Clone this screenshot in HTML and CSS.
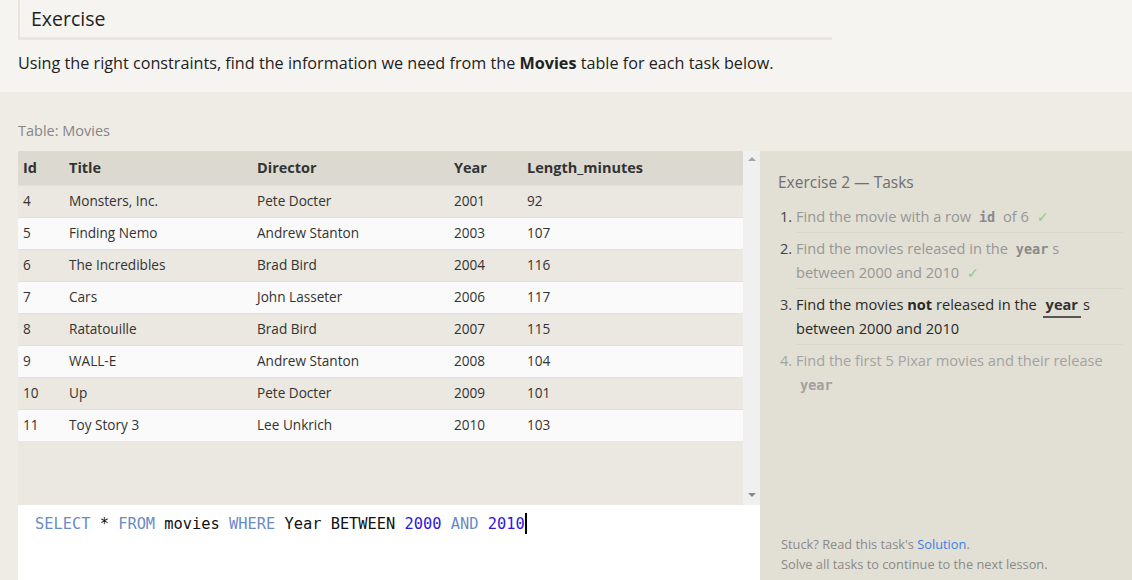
FILE: index.html
```html
<!DOCTYPE html>
<html>
<head>
<meta charset="utf-8">
<link rel="stylesheet" href="styles.css">
</head>
<body>
<section class="intro">
  <div class="heading"><h1>Exercise</h1></div>
  <p class="lead">Using the right constraints, find the information we need from the <strong>Movies</strong> table for each task below.</p>
</section>
<section class="exercise">
  <div class="caption">Table: Movies</div>
  <div class="workspace">
    <div class="left">
      <div class="results">
        <div class="table-scroll">
          <table class="movies">
            <thead>
              <tr><th class="c-id">Id</th><th class="c-title">Title</th><th class="c-dir">Director</th><th class="c-year">Year</th><th>Length_minutes</th></tr>
            </thead>
            <tbody>
              <tr><td>4</td><td>Monsters, Inc.</td><td>Pete Docter</td><td>2001</td><td>92</td></tr>
              <tr><td>5</td><td>Finding Nemo</td><td>Andrew Stanton</td><td>2003</td><td>107</td></tr>
              <tr><td>6</td><td>The Incredibles</td><td>Brad Bird</td><td>2004</td><td>116</td></tr>
              <tr><td>7</td><td>Cars</td><td>John Lasseter</td><td>2006</td><td>117</td></tr>
              <tr><td>8</td><td>Ratatouille</td><td>Brad Bird</td><td>2007</td><td>115</td></tr>
              <tr><td>9</td><td>WALL-E</td><td>Andrew Stanton</td><td>2008</td><td>104</td></tr>
              <tr><td>10</td><td>Up</td><td>Pete Docter</td><td>2009</td><td>101</td></tr>
              <tr><td>11</td><td>Toy Story 3</td><td>Lee Unkrich</td><td>2010</td><td>103</td></tr>
            </tbody>
          </table>
        </div>
        <div class="scrollbar">
          <span class="arrow up"></span>
          <span class="arrow down"></span>
        </div>
      </div>
      <div class="editor"><code><span class="kw">SELECT</span> * <span class="kw">FROM</span> movies <span class="kw">WHERE</span> Year BETWEEN <span class="num">2000</span> <span class="kw">AND</span> <span class="num">2010</span><span class="cursor"></span></code></div>
    </div>
    <aside class="tasks">
      <h2>Exercise 2 — Tasks</h2>
      <ol class="task-list">
        <li class="done">Find the movie with a row <code>id</code> of 6 <span class="check">✓</span></li>
        <li class="done">Find the movies released in the <code>year</code>s between 2000 and 2010 <span class="check">✓</span></li>
        <li class="current">Find the movies <strong>not</strong> released in the <code class="hl">year</code>s between 2000 and 2010</li>
        <li class="todo">Find the first 5 Pixar movies and their release <code>year</code></li>
      </ol>
      <div class="help">
        <p>Stuck? Read this task's <a href="#">Solution</a>.</p>
        <p>Solve all tasks to continue to the next lesson.</p>
      </div>
    </aside>
  </div>
</section>
</body>
</html>
```
FILE: styles.css
```css
* { box-sizing: border-box; }
html, body { margin: 0; padding: 0; }
body {
  width: 1132px;
  height: 580px;
  overflow: hidden;
  background: #efece5;
  font-family: "Open Sans", "Noto Sans", sans-serif;
  color: #222;
}
.intro {
  background: #f6f4f0;
  padding: 0 0 0 18px;
  height: 92px;
}
.heading {
  width: 814px;
  height: 40px;
  border-left: 2px solid #e6e4db;
  border-bottom: 3px solid #e8e6de;
  padding-left: 11px;
}
.heading h1 {
  margin: 0;
  font-weight: normal;
  font-size: 19.5px;
  line-height: 38px;
  color: #222;
}
.lead {
  margin: 11px 0 0;
  font-size: 16.2px;
  line-height: 24px;
}
.lead strong { font-weight: 700; }
.exercise {
  padding-top: 28px;
}
.caption {
  padding-left: 18px;
  font-size: 14.5px;
  line-height: 22px;
  color: #858585;
  height: 31px;
}
.workspace {
  display: flex;
  height: 429px;
}
.left {
  width: 760px;
  padding-left: 18px;
  display: flex;
  flex-direction: column;
}
.results {
  height: 354px;
  display: flex;
  background: #eae8e0;
}
.table-scroll {
  flex: 1;
  overflow: hidden;
}
.movies {
  width: 100%;
  border-collapse: collapse;
  font-size: 13.6px;
  color: #333;
}
.movies th {
  text-align: left;
  font-weight: 700;
  font-size: 14.5px;
  height: 34px;
  background: #dcdad0;
  padding: 0 5px;
  color: #333;
}
.movies td {
  height: 32px;
  padding: 0 5px 1px;
  border-top: 1px solid #e2e0d8;
}
.movies tbody tr:nth-child(odd) td { background: #eae8e0; }
.movies tbody tr:nth-child(even) td { background: #fafafa; }
.c-id { width: 46px; }
.c-title { width: 188px; }
.c-dir { width: 197px; }
.c-year { width: 73px; }
.scrollbar {
  width: 17px;
  background: #f0f0f0;
  display: flex;
  flex-direction: column;
  justify-content: space-between;
  align-items: center;
  padding: 6px 0 8px;
}
.arrow {
  width: 0;
  height: 0;
  border-left: 4px solid transparent;
  border-right: 4px solid transparent;
}
.arrow.up { border-bottom: 4px solid #a3a3a3; }
.arrow.down { border-top: 4px solid #8a8a8a; }
.editor {
  flex: 1;
  background: #fff;
  padding: 7px 0 0 17px;
}
.editor code {
  font-family: "DejaVu Sans Mono", "Liberation Mono", monospace;
  font-size: 15.35px;
  line-height: 24px;
  color: #111;
  white-space: pre;
}
.kw { color: #6a8bc6; }
.num { color: #2d16e0; }
.cursor {
  display: inline-block;
  width: 2px;
  height: 21px;
  background: #000;
  vertical-align: -5px;
}
.tasks {
  width: 372px;
  background: #e2dfd4;
  padding: 20px 9px 0 18px;
  display: flex;
  flex-direction: column;
}
.tasks h2 {
  margin: 0;
  font-weight: normal;
  font-size: 15.5px;
  line-height: 22px;
  color: #6d6f72;
}
.task-list {
  margin: 11px 0 0;
  padding: 0 0 0 18px;
  font-size: 14.6px;
  line-height: 24px;
}
.task-list li {
  border-bottom: 1px solid #d9d6cb;
  padding: 0 8px 4px 0;
  margin-bottom: 3px;
}
.task-list li:last-child { border-bottom: none; }
.task-list li::marker { color: #444; }
.task-list li.done { color: #979797; }
.task-list li.current { color: #2a2a2a; }
.task-list li.todo { color: #a3a3a3; }
.task-list li.todo::marker { color: #a3a3a3; }
.task-list code {
  font-family: "DejaVu Sans Mono", "Liberation Mono", monospace;
  font-weight: bold;
  font-size: 13.5px;
  line-height: 1;
  color: #8a8a8a;
  padding: 0 4px;
}
.task-list li.todo code { color: #a0a0a0; }
.task-list code.hl {
  font-family: "Open Sans", sans-serif;
  font-size: 14.6px;
  color: #333;
  border-bottom: 2px solid #555;
  padding: 0 3px 2px;
  margin: 0 2px;
}
.check {
  color: #8ccc8c;
  margin-left: 4px;
  line-height: 1;
  font-family: "DejaVu Sans", sans-serif;
  font-size: 14px;
}
.help {
  margin-top: auto;
  padding: 0 0 6px 3px;
  font-size: 12.8px;
  line-height: 20px;
  color: #8a8a8a;
}
.help p { margin: 0; }
.help a { color: #3d7fe0; text-decoration: none; }
```
